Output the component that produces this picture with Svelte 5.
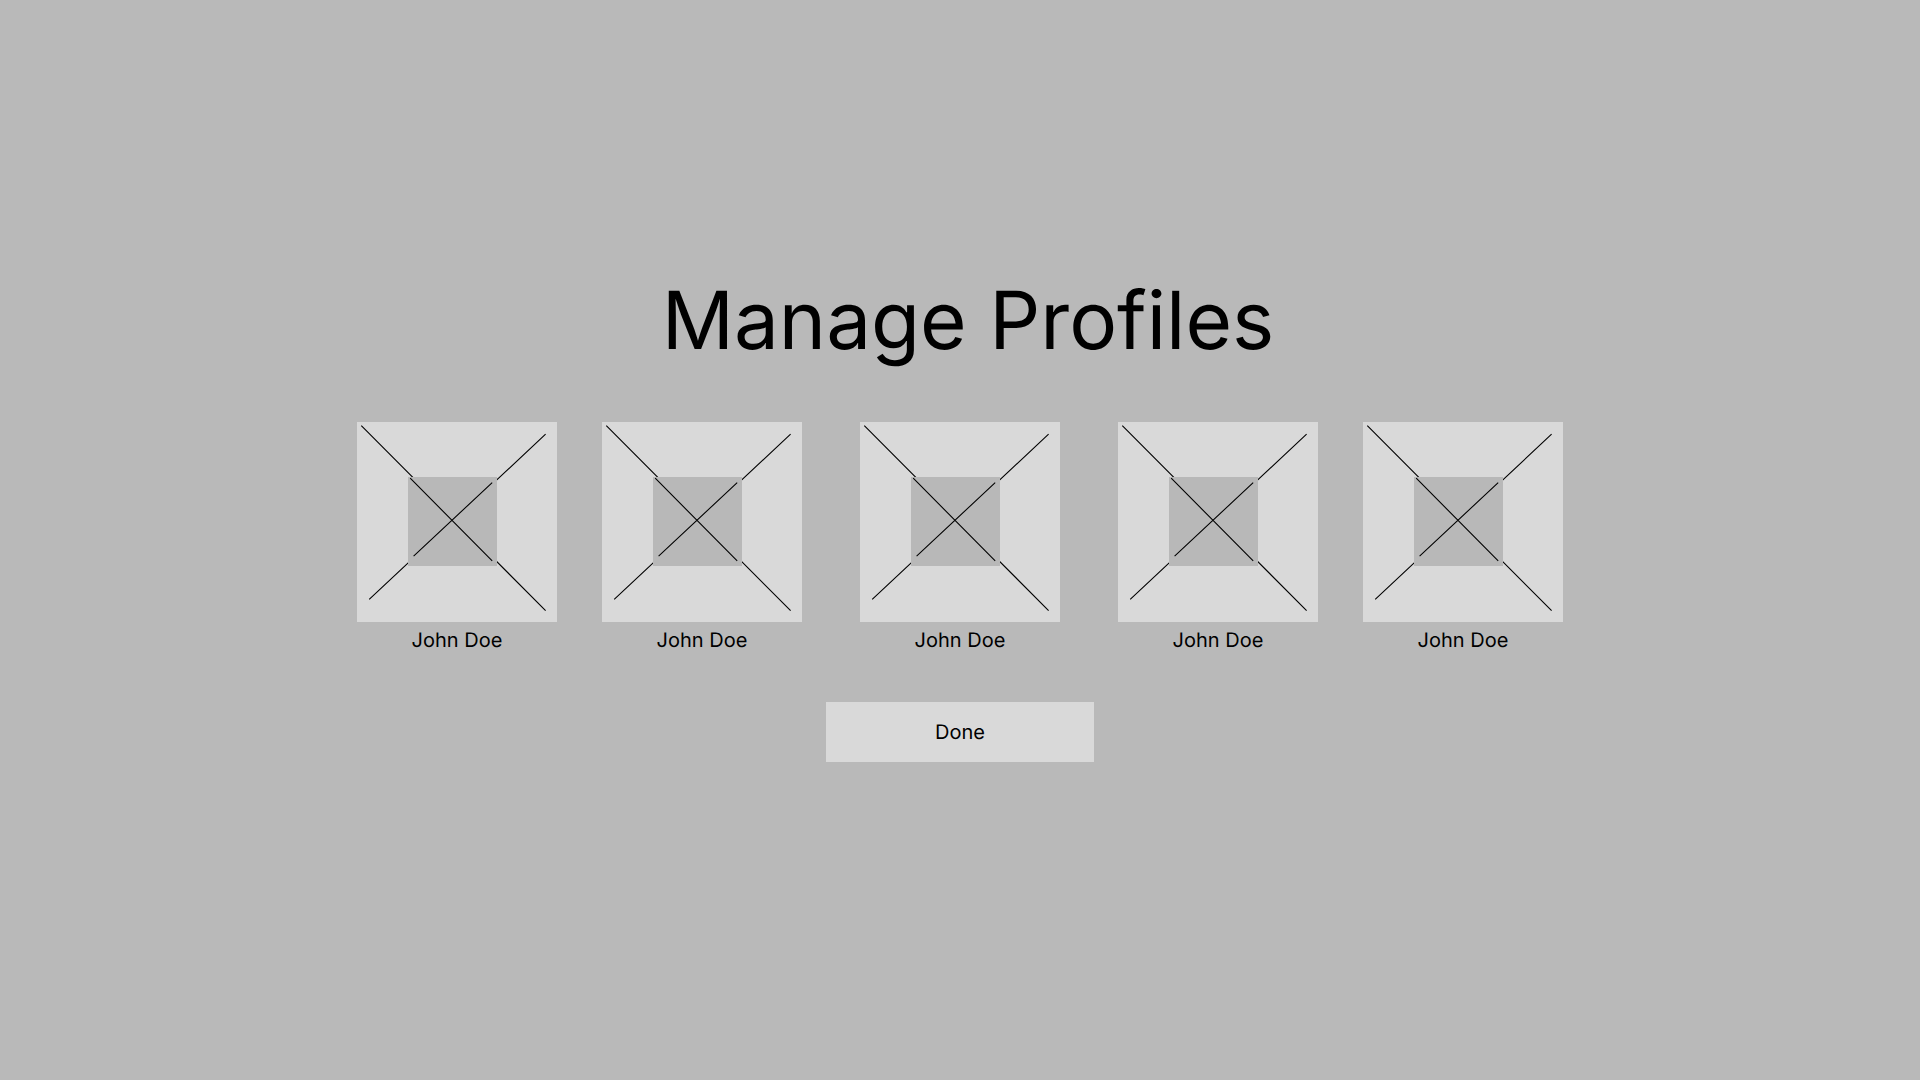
<script>
  const profiles = ['John Doe', 'John Doe', 'John Doe', 'John Doe', 'John Doe'];
</script>

<main>
  <h1>Manage Profiles</h1>

  <ul class="profiles">
    {#each profiles as name}
      <li>
        <button type="button" class="profile">
          <svg viewBox="0 0 200 200" aria-hidden="true">
            <rect class="frame" width="200" height="200" />
            <path d="M4.3 3.7 188.6 188.6M188.6 12.2 12.2 177.4" />
            <rect class="inset" x="51" y="55" width="89" height="89" />
            <path d="M53.2 56.2 135.2 138.8M135.2 60.6 56.6 134.2" />
          </svg>
          <span>{name}</span>
        </button>
      </li>
    {/each}
  </ul>

  <button type="button" class="done">Done</button>
</main>

<style>
  :global(body) {
    margin: 0;
    background: #b9b9b9;
  }

  main {
    box-sizing: border-box;
    display: flex;
    flex-direction: column;
    align-items: center;
    min-height: 100vh;
    padding: 273px 24px 48px;
    color: #000;
    font-family: Inter, sans-serif;
    text-rendering: geometricPrecision;
  }

  h1 {
    margin: 0 0 53px;
    padding-left: 16px;
    font-size: 80px;
    font-weight: 400;
    line-height: 96px;
    text-align: center;
  }

  .profiles {
    display: flex;
    flex-wrap: wrap;
    justify-content: center;
    gap: 45px;
    margin: 0 0 50px;
    padding: 0;
    list-style: none;
  }

  .profiles li:nth-child(3) {
    margin: 0 13px;
  }

  button {
    border: 0;
    color: inherit;
    font-family: inherit;
    font-size: 20px;
    line-height: 24px;
    text-rendering: inherit;
    cursor: pointer;
  }

  .profile {
    display: flex;
    flex-direction: column;
    align-items: center;
    gap: 6px;
    width: 200px;
    padding: 0;
    background: none;
  }

  svg {
    display: block;
    width: 100%;
  }

  path {
    fill: none;
    stroke: #000;
    stroke-width: 1.1;
  }

  .frame {
    fill: #d9d9d9;
  }

  .inset {
    fill: #b8b8b8;
  }

  .done {
    width: 268px;
    max-width: 100%;
    padding: 18px;
    background: #d9d9d9;
  }
</style>
